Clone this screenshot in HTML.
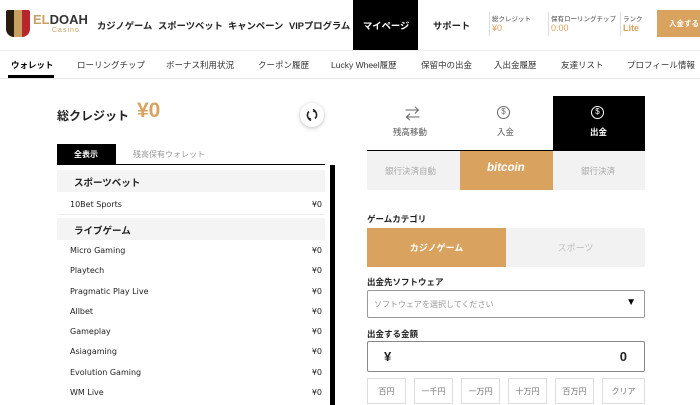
<!DOCTYPE html>
<html><head><meta charset="utf-8"><style>
*{margin:0;padding:0;box-sizing:border-box}
body{width:700px;height:400px;overflow:hidden;background:#fff;font-family:"Liberation Sans","Noto Sans CJK JP",sans-serif;color:#222;position:relative}
.a{position:absolute;white-space:nowrap}
.nav{font-size:9.3px;font-weight:bold;top:18px}
.sub{font-size:8.5px;top:59px;color:#333}
.sm{font-size:6.5px;color:#444}
.gold{color:#d9a35f}
.row{position:absolute;left:70px;width:252px;font-size:8px;font-family:"DejaVu Sans","Noto Sans CJK JP",sans-serif}
.row span{position:absolute;right:0}
.gh{position:absolute;left:57px;width:268px;height:22px;background:#f4f4f4;font-size:9.5px;font-weight:bold;padding:5px 0 0 17px}
.lbl{font-size:8.5px;font-weight:bold}
.bt{position:absolute;top:378px;height:26px;border:1px solid #ddd;font-size:8px;color:#777;text-align:center;padding-top:7px;width:39px}
</style></head><body>
<!-- header -->
<div class="a" style="left:6px;top:10px;width:24px;height:27px;background:linear-gradient(90deg,#2a1c10 0 33%,#c8a060 33% 66%,#b8262b 66%);border-radius:2px 2px 8px 8px"></div>
<div class="a" style="left:33px;top:12px;font-size:13px;font-weight:bold;color:#333"><span style="color:#c9a063">EL</span>DOAH</div>
<div class="a" style="left:52px;top:27px;font-size:7px;color:#c9a063;letter-spacing:1px">Casino</div>
<div class="a nav" style="left:97px">カジノゲーム</div>
<div class="a nav" style="left:158px">スポーツベット</div>
<div class="a nav" style="left:228px">キャンペーン</div>
<div class="a nav" style="left:289px">VIPプログラム</div>
<div class="a" style="left:353px;top:0;width:65px;height:50px;background:#000"></div>
<div class="a nav" style="left:363px;color:#fff">マイページ</div>
<div class="a nav" style="left:433px">サポート</div>
<div class="a" style="left:489px;top:12px;width:1px;height:24px;background:#ddd"></div>
<div class="a" style="left:548px;top:12px;width:1px;height:24px;background:#ddd"></div>
<div class="a" style="left:620px;top:12px;width:1px;height:24px;background:#ddd"></div>
<div class="a sm" style="left:492px;top:13px">総クレジット</div>
<div class="a gold" style="left:492px;top:23px;font-size:9px">¥0</div>
<div class="a sm" style="left:551px;top:13px">保有ローリングチップ</div>
<div class="a gold" style="left:551px;top:23px;font-size:9px">0.00</div>
<div class="a sm" style="left:623px;top:13px">ランク</div>
<div class="a gold" style="left:623px;top:23px;font-size:9px;font-weight:bold">Lite</div>
<div class="a" style="left:657px;top:10px;width:43px;height:27px;background:#d9a35f;color:#fff;font-size:7.5px;font-weight:bold;padding:8px 0 0 12px">入金する</div>
<!-- subnav -->
<div class="a" style="left:0;top:50px;width:700px;height:1px;background:#eee"></div>
<div class="a sub" style="left:11px;font-weight:bold;color:#000">ウォレット</div>
<div class="a" style="left:8px;top:75px;width:46px;height:3px;background:#000"></div>
<div class="a sub" style="left:77px">ローリングチップ</div>
<div class="a sub" style="left:166px">ボーナス利用状況</div>
<div class="a sub" style="left:258px">クーポン履歴</div>
<div class="a sub" style="left:331px">Lucky Wheel履歴</div>
<div class="a sub" style="left:421px">保留中の出金</div>
<div class="a sub" style="left:494px">入出金履歴</div>
<div class="a sub" style="left:561px">友達リスト</div>
<div class="a sub" style="left:627px">プロフィール情報</div>
<div class="a" style="left:0;top:78px;width:700px;height:1px;background:#e6e6e6"></div>
<!-- left -->
<div class="a" style="left:57px;top:107px;font-size:12px;font-weight:bold">総クレジット</div>
<div class="a gold" style="left:137px;top:99px;font-size:21px;font-weight:bold">¥0</div>
<div class="a" style="left:300px;top:103px;width:24px;height:24px;border-radius:50%;box-shadow:0 1px 4px rgba(0,0,0,.25);background:#fff"></div>
<svg class="a" style="left:305px;top:108px" width="14" height="14" viewBox="0 0 14 14" fill="none" stroke="#222" stroke-width="1.6"><path d="M4 3.5A5 5 0 0 0 5 11.5"/><path d="M10 10.5A5 5 0 0 0 9 2.5"/><path d="M8 1.5l1.5 1-1 1.5M6 12.5l-1.5-1 1-1.5"/></svg>
<div class="a" style="left:57px;top:144px;width:59px;height:20px;background:#000;color:#fff;font-size:8px;font-weight:bold;padding:5px 0 0 17px">全表示</div>
<div class="a" style="left:133px;top:149px;font-size:8px;color:#999">残高保有ウォレット</div>
<div class="a" style="left:57px;top:164px;width:268px;height:1px;background:#000"></div>
<div class="a" style="left:330px;top:165px;width:5px;height:240px;background:#000"></div>
<div class="gh" style="top:170px">スポーツベット</div>
<div class="row" style="top:200px">10Bet Sports<span>¥0</span></div>
<div class="a" style="left:57px;top:214px;width:268px;height:1px;background:#eee"></div>
<div class="gh" style="top:218px">ライブゲーム</div>
<div class="row" style="top:246px">Micro Gaming<span>¥0</span></div>
<div class="row" style="top:266px">Playtech<span>¥0</span></div>
<div class="row" style="top:287px">Pragmatic Play Live<span>¥0</span></div>
<div class="row" style="top:307px">Allbet<span>¥0</span></div>
<div class="row" style="top:327px">Gameplay<span>¥0</span></div>
<div class="row" style="top:347px">Asiagaming<span>¥0</span></div>
<div class="row" style="top:368px">Evolution Gaming<span>¥0</span></div>
<div class="row" style="top:388px">WM Live<span>¥0</span></div>
<!-- right -->
<div class="a" style="left:553px;top:96px;width:92px;height:55px;background:#000"></div>
<div class="a" style="left:367px;top:150px;width:186px;height:1.5px;background:#000"></div>
<div class="a" style="left:405px;top:103px;font-size:15px;color:#666">⇄</div>
<div class="a" style="left:393px;top:126px;font-size:8.5px;color:#555">残高移動</div>
<div class="a" style="left:497px;top:106px;width:13px;height:13px;border:1.5px solid #666;border-radius:50%;font-size:8px;color:#666;text-align:center;line-height:10px">$</div>
<div class="a" style="left:497px;top:126px;font-size:8.5px;color:#555">入金</div>
<div class="a" style="left:591px;top:106px;width:13px;height:13px;border:1.5px solid #fff;border-radius:50%;font-size:8px;color:#fff;text-align:center;line-height:10px">$</div>
<div class="a" style="left:590px;top:126px;font-size:8.5px;color:#fff;font-weight:bold">出金</div>
<div class="a" style="left:367px;top:151px;width:278px;height:39px;background:#f2f2f2"></div>
<div class="a" style="left:460px;top:151px;width:93px;height:39px;background:#d9a35f"></div>
<div class="a" style="left:385px;top:165px;font-size:8.5px;color:#aaa">銀行決済自動</div>
<div class="a" style="left:487px;top:162px;font-size:11.5px;color:#fff;font-weight:bold;font-style:italic">bitcoin</div>
<div class="a" style="left:581px;top:165px;font-size:8.5px;color:#aaa">銀行決済</div>
<div class="a lbl" style="left:367px;top:213px">ゲームカテゴリ</div>
<div class="a" style="left:367px;top:228px;width:139px;height:39px;background:#d9a35f;color:#fff;font-size:9px;font-weight:bold;text-align:center;padding-top:13px">カジノゲーム</div>
<div class="a" style="left:506px;top:228px;width:139px;height:39px;background:#f2f2f2;color:#bbb;font-size:9px;text-align:center;padding-top:13px">スポーツ</div>
<div class="a lbl" style="left:367px;top:276px">出金先ソフトウェア</div>
<div class="a" style="left:367px;top:290px;width:278px;height:28px;border:1px solid #999;border-radius:2px;font-size:8px;color:#999;padding:8px 0 0 6px">ソフトウェアを選択してください<span style="position:absolute;right:8px;top:6px;color:#000;font-size:10px">▼</span></div>
<div class="a lbl" style="left:367px;top:328px">出金する金額</div>
<div class="a" style="left:367px;top:341px;width:278px;height:31px;border:1px solid #888;border-radius:2px;font-size:13px;font-weight:bold;padding:7px 0 0 16px">¥<span style="position:absolute;right:17px">0</span></div>
<div class="bt" style="left:367px">百円</div>
<div class="bt" style="left:414px">一千円</div>
<div class="bt" style="left:461px">一万円</div>
<div class="bt" style="left:508px">十万円</div>
<div class="bt" style="left:555px">百万円</div>
<div class="bt" style="left:602px;width:43px">クリア</div>
</body></html>
